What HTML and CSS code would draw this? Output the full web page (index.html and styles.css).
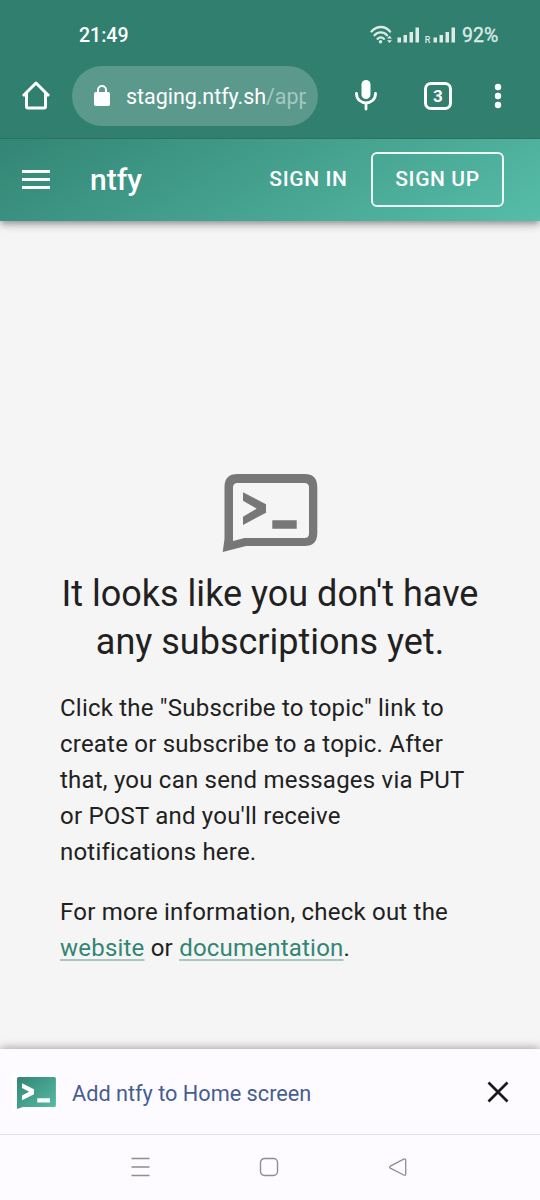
FILE: index.html
```html
<!DOCTYPE html>
<html lang="en">
<head>
<meta charset="utf-8">
<title>ntfy</title>
<link rel="stylesheet" href="styles.css">
</head>
<body>
<div class="phone">
  <div class="status">
    <span class="clock">21:49</span>
    <svg class="signals" width="87" height="20" viewBox="0 0 87 20" fill="#dcebe7">
      <g fill="none" stroke="#dcebe7" stroke-width="2.3" stroke-linecap="round">
        <path d="M1.500 6.500C7 .5 15 .5 20 6.500"/><path d="M4.500 10.300C8 6.500 13.500 6.500 17 10.300"/><path d="M7.500 13.800C9.500 12 12 12 14 13.800"/>
      </g>
      <circle cx="10.500" cy="16.700" r="1.700"/>
      <path d="M17 13.500 19.500 10.800 22 13.500ZM17 15.300H22L19.500 18Z"/>
      <path d="M27.500 12.500h3.500v5h-3.500zM33.500 10h3.500v7.500h-3.500zM39.500 7h3.500v10.500h-3.500zM45.500 2.500h3.500v15h-3.500z"/>
      <text x="54.800" y="18" class="roam">R</text>
      <path d="M63.500 12.500h3.500v5h-3.500zM69.500 10h3.500v7.500h-3.500zM75.500 7h3.500v10.500h-3.500zM81.500 2.500h3.500v15h-3.500z"/>
    </svg>
    <span class="battery">92%</span>
  </div>
  <div class="browser">
    <svg class="home" width="30" height="30" viewBox="0 0 30 30" fill="none" stroke="#fff" stroke-width="3" stroke-linejoin="round"><path d="M2 15 15 2 28 15M5.500 12.500V25.500Q5.500 27 7 27H23Q24.500 27 24.500 25.500V12.500"/></svg>
    <div class="omnibox">
      <svg width="18" height="24" viewBox="0 0 18 24"><rect x="1" y="8" width="16" height="14" rx="1.800" fill="#fff"/><path d="M5 9V6a4 4 0 0 1 8 0v3" fill="none" stroke="#fff" stroke-width="2"/></svg>
      <div class="url">staging.ntfy.sh<span>/app</span></div>
    </div>
    <svg class="mic" width="24" height="32" viewBox="0 0 24 32"><rect x="7.500" y="0" width="9" height="19" rx="4.500" fill="#fff"/><path d="M2.500 13.500C2.500 26 21.500 26 21.500 13.500M12 23V29" fill="none" stroke="#fff" stroke-width="2.800" stroke-linecap="round"/></svg>
    <div class="tabs">3</div>
    <svg class="dots" width="8" height="26" viewBox="0 0 8 26" fill="#fff"><circle cx="4" cy="4" r="3.200"/><circle cx="4" cy="13" r="3.200"/><circle cx="4" cy="22" r="3.200"/></svg>
  </div>
  <header class="appbar">
    <svg width="28" height="19" viewBox="0 0 28 19" fill="#fff"><path d="M0 0h28v3H0zM0 8h28v3H0zM0 16h28v3H0z"/></svg>
    <div class="brand">ntfy</div>
    <div class="signin">SIGN IN</div>
    <div class="signup">SIGN UP</div>
  </header>
  <main class="content">
    <svg class="logo" width="96" height="80" viewBox="0 0 96 80" fill="#777"><path fill-rule="evenodd" d="M.7 79 2.500 66V14Q2.500 1 15.500 1H82.500Q95.300 1 95.300 14V60Q95.300 73 82.500 73H24ZM11 68 22.300 65H82.500Q87 65 87 60.500V14.500Q87 10 82.500 10H15.500Q11 10 11 14.500Z"/><path d="M21 19.300 44 31.300V39.700L21 52V43.700L34.700 35.700 21 27.700ZM50.300 47.200H74.700V55.700H50.300Z"/></svg>
    <h1>It looks like you don't have any subscriptions yet.</h1>
    <p>Click the "Subscribe to topic" link to create or subscribe to a topic. After that, you can send messages via PUT or POST and you'll receive notifications here.</p>
    <p>For more information, check out the <a>website</a> or <a>documentation</a>.</p>
  </main>
  <div class="install">
    <svg class="applogo" width="48" height="42" viewBox="0 0 48 42"><defs><linearGradient id="g" x1="0" y1="0" x2="1" y2="1"><stop stop-color="#338574"/><stop offset="1" stop-color="#56bda8"/></linearGradient></defs><path d="M4 2H46V40H20L0 42V6Q0 2 4 2Z" fill="#fff"/><path d="M7 6H42Q43.900 6 43.900 7.500V34.500Q43.900 36 42 36H11L5 38V7.500Q5 6 7 6Z" fill="url(#g)"/><path d="M10 12.300 22 18.300V23.300L10 29.200V24.500L17.200 20.800 10 17ZM25.300 27.300H38V31.500H25.300Z" fill="#fff"/></svg>
    <div class="prompt">Add ntfy to Home screen</div>
    <svg width="22" height="22" viewBox="0 0 22 22" fill="none" stroke="#191a1e" stroke-width="2.700"><path d="M1.500 1.500 20.500 20.500M20.500 1.500 1.500 20.500"/></svg>
  </div>
  <nav class="navkeys">
    <svg width="20" height="20" viewBox="0 0 20 20" fill="none" stroke="#8e8d90" stroke-width="1.500"><path d="M1.500 1.500H19.500M1.500 10H19.500M1.500 18.500H19.500"/></svg>
    <svg width="20" height="20" viewBox="0 0 20 20" fill="none" stroke="#8e8d90" stroke-width="1.400"><rect x="1.500" y="1.500" width="17" height="17" rx="4"/></svg>
    <svg width="20" height="20" viewBox="0 0 20 20" fill="none" stroke="#8e8d90" stroke-width="1.300"><path d="M2.300 9.200 15.700 2.200Q17.700 1.300 17.700 3.200V17Q17.700 19 15.700 18L2.300 11.200Q.8 10.200 2.300 9.200Z"/></svg>
  </nav>
</div>
</body>
</html>
```
FILE: styles.css
```css
* { box-sizing: border-box; }
body { margin: 0; font-family: Roboto, "Liberation Sans", sans-serif; }
svg { display: block; flex: none; }
.phone { width: 540px; height: 1200px; display: flex; flex-direction: column; background: #f5f5f5; overflow: hidden; }
.status { height: 60px; padding: 10px 42px 0 79px; display: flex; align-items: center; background: #317f6f; color: #fff; flex: none; }
.clock { font-size: 19.500px; font-weight: 500; flex: 1; }
.roam { font-size: 9px; font-weight: 500; }
.battery { margin-left: 5px; font-size: 19.500px; color: #dcebe7; width: 36px; white-space: nowrap; -webkit-text-stroke: .3px #dcebe7; }
.browser { height: 79px; padding: 7px 38px 13px 21px; display: flex; align-items: center; background: #317f6f; border-bottom: 1px solid #2b7163; flex: none; }
.omnibox { width: 246px; height: 60px; margin-left: 21px; padding: 0 12px 0 21px; border-radius: 30px; background: #5a998c; display: flex; align-items: center; }
.url { margin-left: 15px; padding-top: 2px; width: 180px; overflow: hidden; white-space: nowrap; font-size: 21.500px; letter-spacing: -.05px; line-height: 30px; color: #fff; }
.url span { color: #a5c9c1; }
.mic { margin-left: 36px; }
.tabs { width: 28px; height: 28px; margin-left: 46px; border: 3px solid #fff; border-radius: 7px; color: #fff; font-size: 17px; line-height: 22px; font-weight: 700; text-align: center; }
.dots { margin-left: 42px; }
.appbar { height: 82px; padding: 0 36px 1px 22px; display: flex; align-items: center; background: linear-gradient(150deg, #338574, #56bda8); color: #fff; flex: none; box-shadow: 0 3px 6px -1px rgba(0,0,0,.3), 0 6px 8px rgba(0,0,0,.1), 0 1px 12px rgba(0,0,0,.1); z-index: 1; clip-path: inset(0 0 -24px 0); }
.brand { margin-left: 40px; padding-bottom: 1px; flex: 1; font-size: 30px; font-weight: 500; }
.signin, .signup { font-size: 21px; font-weight: 500; letter-spacing: .6px; }
.signin { padding-bottom: 1px; }
.signup { margin-left: 23.500px; width: 133px; height: 55px; border: 2px solid rgba(255,255,255,.9); border-radius: 6px; line-height: 50px; text-align: center; }
.content { flex: 1; padding: 252px 60px 0; color: #212121; }
.logo { margin: 0 auto 17px; }
h1 { margin: 0; font-size: 36px; font-weight: 400; line-height: 48px; text-align: center; }
p { margin: 24px 0 0; font-size: 24px; line-height: 36px; letter-spacing: .215px; }
a { color: #338574; text-decoration: underline; text-decoration-color: rgba(51,133,116,.4); text-decoration-thickness: 2px; text-underline-offset: 2.500px; }
.install { height: 86px; padding: 1px 31px 0 12px; display: flex; align-items: center; background: #fdfbff; border-bottom: 1px solid #dfe2eb; box-shadow: 0 -1px 9px rgba(0,0,0,.35); flex: none; }
.prompt { flex: 1; margin-left: 12px; padding-top: 2px; font-size: 21.700px; color: #475d92; }
.navkeys { height: 65px; padding: 0 132px 1px 130px; display: flex; justify-content: space-between; align-items: center; background: #fdfbff; flex: none; z-index: 1; }
```
